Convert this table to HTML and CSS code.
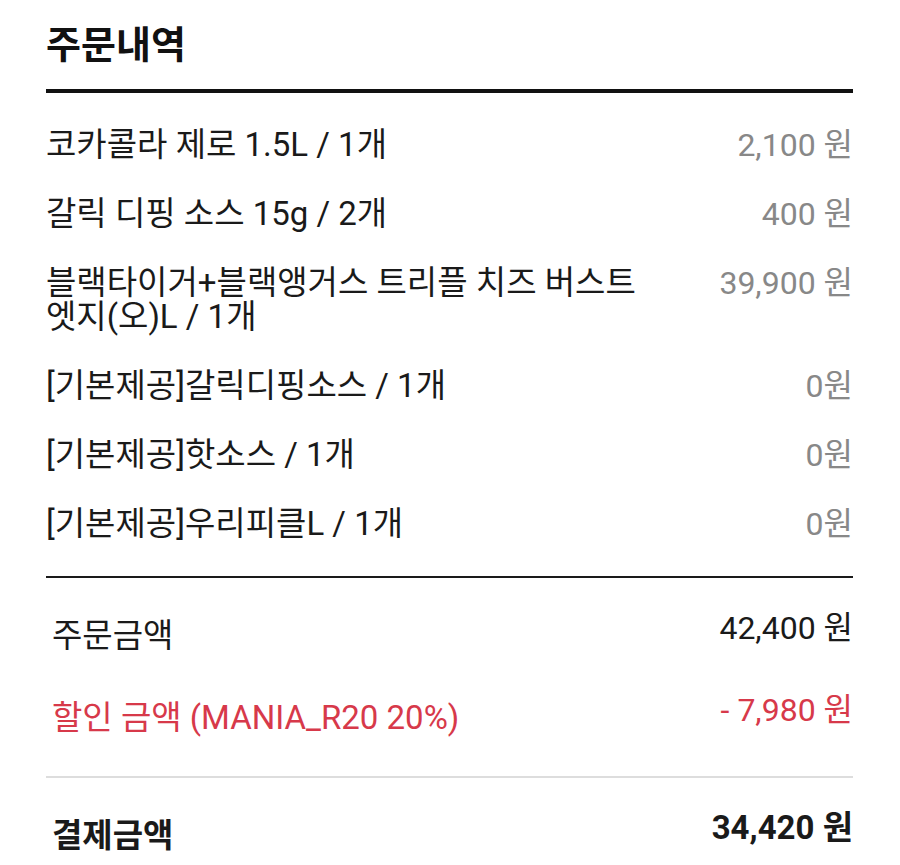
FILE: index.html
```html
<!DOCTYPE html>
<html lang="ko">
<head>
<meta charset="utf-8">
<link rel="stylesheet" href="styles.css">
</head>
<body>
<div class="page">
  <h1 class="title">주문내역</h1>
  <ul class="items">
    <li class="item"><span class="name">코카콜라 제로 1.5L / 1개</span><span class="price">2,100 원</span></li>
    <li class="item"><span class="name">갈릭 디핑 소스 15g / 2개</span><span class="price">400 원</span></li>
    <li class="item"><span class="name">블랙타이거+블랙앵거스 트리플 치즈 버스트 엣지(오)L / 1개</span><span class="price">39,900 원</span></li>
    <li class="item"><span class="name">[기본제공]갈릭디핑소스 / 1개</span><span class="price">0원</span></li>
    <li class="item"><span class="name">[기본제공]핫소스 / 1개</span><span class="price">0원</span></li>
    <li class="item"><span class="name">[기본제공]우리피클L / 1개</span><span class="price">0원</span></li>
  </ul>
  <div class="summary">
    <div class="sum-row"><span class="label">주문금액</span><span class="amount">42,400 원</span></div>
    <div class="sum-row discount"><span class="label">할인 금액 (MANIA_R20 20%)</span><span class="amount">- 7,980 원</span></div>
  </div>
  <div class="total">
    <div class="sum-row total-row"><span class="label">결제금액</span><span class="amount">34,420 원</span></div>
  </div>
</div>
</body>
</html>
```
FILE: styles.css
```css
* { box-sizing: border-box; }
html, body { margin: 0; padding: 0; background: #fff; }
body {
  font-family: Roboto, "Noto Sans CJK KR", sans-serif;
  color: #1a1a1a;
}
.page {
  padding: 0 47px 0 46px;
}
.title {
  margin: 0;
  padding-top: 20px;
  height: 93px;
  font-size: 38px;
  line-height: 50px;
  font-weight: 700;
  color: #111;
  border-bottom: 4px solid #111;
}
.items {
  list-style: none;
  margin: 0;
  padding: 35px 0 35px;
  display: flex;
  flex-direction: column;
  gap: 35px;
  border-bottom: 2px solid #1a1a1a;
}
.item {
  display: flex;
  justify-content: space-between;
  align-items: flex-start;
  font-size: 32px;
  line-height: 34px;
}
.name {
  flex: 0 1 625px;
  font-size: 33px;
  color: #1a1a1a;
  word-break: keep-all;
}
.price {
  color: #888;
  white-space: nowrap;
}
.summary {
  padding: 33px 0 41px;
  display: flex;
  flex-direction: column;
  gap: 40px;
  border-bottom: 2px solid #ddd;
}
.sum-row {
  display: flex;
  justify-content: space-between;
  align-items: flex-start;
  font-size: 32px;
  line-height: 34px;
}
.sum-row .label {
  padding: 8px 0 0 6px;
  font-size: 33px;
}
.discount { color: #d7394a; }
.total { padding: 33px 0 0; }
.total-row { font-weight: 700; font-size: 33px; }
```
